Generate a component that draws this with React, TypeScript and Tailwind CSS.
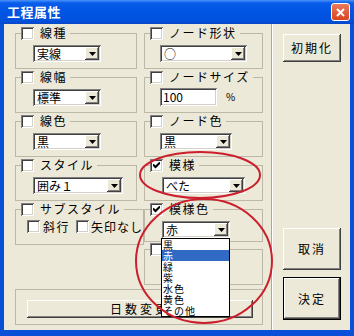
import React from "react";

const sunken =
  "shadow-[inset_1px_1px_#808080,inset_-1px_-1px_#ffffff,inset_2px_2px_#404040,inset_-2px_-2px_#d4d0c8]";

function Check({ checked }: { checked?: boolean }) {
  return (
    <span
      className={`relative block w-[13px] h-[13px] shrink-0 bg-white shadow-[inset_1px_1px_#808080,inset_-1px_-1px_#ffffff,inset_2px_2px_#404040,inset_-2px_-2px_#d4d0c8]`}
    >
      {checked && (
        <svg className="absolute left-[3px] top-[3px]" width="7" height="7" viewBox="0 0 7 7">
          <path d="M0 2.5 L2.5 5 L7 0.5" stroke="#000" strokeWidth="2" fill="none" />
        </svg>
      )}
    </span>
  );
}

function Combo({ value, className }: { value: string; className: string }) {
  return (
    <div className={`flex h-[17px] bg-white p-[2px] ${sunken} ${className}`}>
      <span className="flex flex-1 items-center pl-[2px] text-[12px] leading-[13px] text-black whitespace-nowrap">
        {value}
      </span>
      <span className="flex w-[14px] items-center justify-center bg-[#ece9d8] shadow-[inset_-1px_-1px_#404040,inset_1px_1px_#ffffff,inset_-2px_-2px_#808080]">
        <svg width="7" height="4" viewBox="0 0 7 4">
          <path d="M0 0 H7 L3.5 4 Z" fill="#000" />
        </svg>
      </span>
    </div>
  );
}

function Group({
  label,
  checked,
  className,
  children,
}: {
  label?: string;
  checked?: boolean;
  className: string;
  children?: React.ReactNode;
}) {
  return (
    <fieldset className={`border border-[#bcb8a8] ${className}`}>
      <legend className="ml-[5px] pr-[3px] flex items-center gap-[6px] h-[14px] text-[12px] leading-[14px] text-black">
        <Check checked={checked} />
        {label && <span className="tracking-[1.5px] whitespace-nowrap">{label}</span>}
      </legend>
      {children}
    </fieldset>
  );
}

const raised =
  "bg-[#ece9d8] shadow-[inset_-1px_-1px_#404040,inset_1px_1px_#ffffff,inset_-2px_-2px_#808080]";

export default function App() {
  const colors = ["黒", "赤", "緑", "紫", "水色", "黄色", "その他"];
  return (
    <div className="relative w-[354px] h-[336px] overflow-hidden bg-[#0a4fd8] font-['Noto_Sans_CJK_JP','Noto_Sans',sans-serif]">
      {/* title bar */}
      <div className="flex h-[24px] items-center justify-between bg-[linear-gradient(#4a94fb_0%,#0a5cea_12%,#0054e3_50%,#0051dc_88%,#0a45c4_100%)] pl-[7px] pr-[4px]">
        <span className="text-[13px] font-bold leading-[14px] text-white tracking-[0.5px]">工程属性</span>
        <span className="flex h-[18px] w-[19px] items-center justify-center rounded-[3px] border border-white bg-[linear-gradient(#e97a5a,#d9451f)]">
          <svg width="9" height="9" viewBox="0 0 9 9">
            <path d="M1 1 L8 8 M8 1 L1 8" stroke="#fff" strokeWidth="2" />
          </svg>
        </span>
      </div>

      {/* body */}
      <div className="mx-[4px] flex h-[306px] bg-[#ece9d8] text-black">
        {/* left area */}
        <div className="w-[267px] pl-[11px] pt-[2px] flex flex-col">
          <div className="flex gap-[7px]">
            {/* left column */}
            <div className="flex w-[122px] flex-col gap-[1px]">
              <Group label="線種" className="h-[43px]">
                <Combo value="実線" className="ml-[17px] mt-[5px] w-[68px]" />
              </Group>
              <Group label="線幅" className="h-[43px]">
                <Combo value="標準" className="ml-[17px] mt-[5px] w-[68px]" />
              </Group>
              <Group label="線色" className="h-[43px]">
                <Combo value="黒" className="ml-[17px] mt-[5px] w-[68px]" />
              </Group>
              <Group label="スタイル" className="h-[43px]">
                <Combo value="囲み１" className="ml-[17px] mt-[5px] w-[90px]" />
              </Group>
              <Group label="サブスタイル" className="h-[43px]">
                <div className="ml-[11px] mt-[4px] flex items-center whitespace-nowrap text-[12px] leading-[13px]">
                  <Check />
                  <span className="ml-[3px] shrink-0 tracking-[1.5px]">斜行</span>
                  <span className="ml-[6px] shrink-0">
                    <Check />
                  </span>
                  <span className="ml-[2px] shrink-0 tracking-[1px]">矢印なし</span>
                </div>
              </Group>
            </div>
            {/* right column */}
            <div className="flex w-[119px] flex-col">
              <Group label="ノード形状" className="h-[43px]">
                <Combo value="○" className="ml-[15px] mt-[5px] w-[87px]" />
              </Group>
              <Group label="ノードサイズ" className="mt-[1px] h-[43px]">
                <div className="ml-[15px] mt-[4px] flex items-center">
                  <div className={`h-[18px] w-[57px] bg-white pl-[3px] pt-[2px] text-[12px] leading-[14px] ${sunken}`}>100</div>
                  <span className="ml-[9px] text-[10px] leading-[12px]">%</span>
                </div>
              </Group>
              <Group label="ノード色" className="mt-[1px] h-[43px]">
                <Combo value="黒" className="ml-[15px] mt-[5px] w-[72px]" />
              </Group>
              <Group label="模様" checked className="mt-[1px] h-[43px]">
                <Combo value="べた" className="ml-[17px] mt-[5px] w-[83px]" />
              </Group>
              <Group label="模様色" checked className="mt-[1px] h-[40px]">
                <div className="relative ml-[17px] mt-[5px] w-[68px]">
                  <Combo value="赤" className="w-[68px]" />
                  <div className="absolute left-[-1px] top-[17px] z-10 w-[69px] border border-black bg-white text-[10px] leading-[11px]">
                    {colors.map((c, i) => (
                      <div
                        key={c}
                        className={`h-[11px] pl-[1px] whitespace-nowrap tracking-[1px] ${i === 1 ? "bg-[#316ac5] text-white" : "text-black"}`}
                      >
                        {c}
                      </div>
                    ))}
                  </div>
                </div>
              </Group>
              <Group className="h-[43px]" />
            </div>
          </div>
          {/* bottom frame */}
          <div className="mt-[4px] h-[36px] w-[248px] border border-[#bcb8a8] pl-[11px] pt-[10px]">
            <div className={`flex h-[18px] w-[226px] items-center justify-center text-[12px] tracking-[3px] ${raised}`}>
              日数変更
            </div>
          </div>
        </div>

        {/* separator */}
        <div className="w-[2px] border-l border-[#aca899] bg-white" />

        {/* right buttons */}
        <div className="flex flex-col pl-[10px] pt-[10px]">
          <div className={`flex h-[28px] w-[58px] items-center justify-center text-[12px] tracking-[2px] ${raised}`}>
            初期化
          </div>
          <div className={`mt-[166px] flex h-[42px] w-[58px] items-center justify-center text-[12px] tracking-[2px] ${raised}`}>
            取消
          </div>
          <div className="mt-[7px] h-[43px] w-[58px] border border-black">
            <div className={`flex h-full w-full items-center justify-center text-[12px] tracking-[2px] ${raised}`}>
              決定
            </div>
          </div>
        </div>
      </div>

      {/* annotation ellipses */}
      <svg className="pointer-events-none absolute left-0 top-0 z-20" width="354" height="336" viewBox="0 0 354 336">
        <ellipse cx="200" cy="175" rx="60" ry="23" fill="none" stroke="#cc1f2d" strokeWidth="2" />
        <ellipse cx="204" cy="261" rx="68" ry="62" fill="none" stroke="#cc1f2d" strokeWidth="2" />
      </svg>
    </div>
  );
}
